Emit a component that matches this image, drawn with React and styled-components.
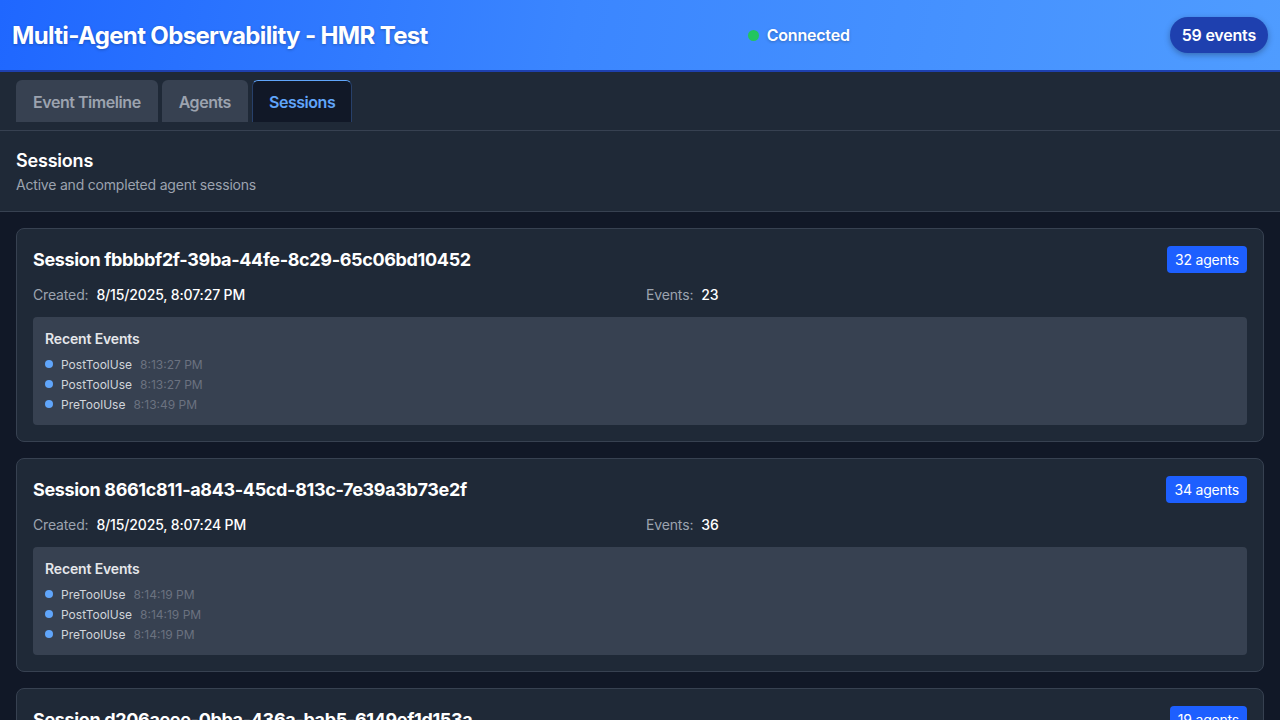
import React from "react";
import styled, { createGlobalStyle } from "styled-components";

const GlobalStyle = createGlobalStyle`
  * { box-sizing: border-box; }
  html, body {
    margin: 0;
    padding: 0;
    background: #111827;
    font-family: Inter, "Noto Sans", "Liberation Sans", sans-serif;
    -webkit-font-smoothing: antialiased;
  }
`;

const sessions = [
  {
    id: "fbbbbf2f-39ba-44fe-8c29-65c06bd10452",
    agents: 32,
    created: "8/15/2025, 8:07:27 PM",
    events: 23,
    recent: [
      { type: "PostToolUse", time: "8:13:27 PM" },
      { type: "PostToolUse", time: "8:13:27 PM" },
      { type: "PreToolUse", time: "8:13:49 PM" },
    ],
  },
  {
    id: "8661c811-a843-45cd-813c-7e39a3b73e2f",
    agents: 34,
    created: "8/15/2025, 8:07:24 PM",
    events: 36,
    recent: [
      { type: "PreToolUse", time: "8:14:19 PM" },
      { type: "PostToolUse", time: "8:14:19 PM" },
      { type: "PreToolUse", time: "8:14:19 PM" },
    ],
  },
  {
    id: "d206aeee-0bba-436a-bab5-6149ef1d153a",
    agents: 19,
    created: "8/15/2025, 8:07:20 PM",
    events: 18,
    recent: [
      { type: "PreToolUse", time: "8:14:02 PM" },
      { type: "PostToolUse", time: "8:14:02 PM" },
      { type: "PreToolUse", time: "8:14:05 PM" },
    ],
  },
];

const App = () => {
  const [tab, setTab] = React.useState("sessions");

  return (
    <>
      <GlobalStyle />
      <Page>
        <Header>
          <Title>Multi-Agent Observability - HMR Test</Title>
          <Status>
            <Dot />
            Connected
          </Status>
          <EventPill>59 events</EventPill>
        </Header>

        <TabBar>
          <Tab active={tab === "timeline"} onClick={() => setTab("timeline")}>
            Event Timeline
          </Tab>
          <Tab active={tab === "agents"} onClick={() => setTab("agents")}>
            Agents
          </Tab>
          <Tab active={tab === "sessions"} onClick={() => setTab("sessions")}>
            Sessions
          </Tab>
        </TabBar>

        <SectionHead>
          <SectionTitle>Sessions</SectionTitle>
          <SectionSub>Active and completed agent sessions</SectionSub>
        </SectionHead>

        <List>
          {sessions.map((s) => (
            <Card key={s.id}>
              <CardTop>
                <CardTitle>Session {s.id}</CardTitle>
                <AgentBadge>{s.agents} agents</AgentBadge>
              </CardTop>
              <Meta>
                <MetaItem>
                  <MetaLabel>Created:</MetaLabel>
                  <MetaValue>{s.created}</MetaValue>
                </MetaItem>
                <MetaItem>
                  <MetaLabel>Events:</MetaLabel>
                  <MetaValue>{s.events}</MetaValue>
                </MetaItem>
              </Meta>
              <Recent>
                <RecentTitle>Recent Events</RecentTitle>
                {s.recent.map((e, i) => (
                  <RecentRow key={i}>
                    <BlueDot />
                    <EventName>{e.type}</EventName>
                    <EventTime>{e.time}</EventTime>
                  </RecentRow>
                ))}
              </Recent>
            </Card>
          ))}
        </List>
      </Page>
    </>
  );
};

const Page = styled.div`
  height: 720px;
  overflow: hidden;
  background: #111827;
`;

const Header = styled.header`
  display: flex;
  align-items: center;
  justify-content: space-between;
  height: 72px;
  padding: 0 12px;
  background: linear-gradient(100deg, #1f67ff 0%, #3b86ff 45%, #4f9cff 100%);
  border-bottom: 2px solid #1e40af;
`;

const Title = styled.h1`
  margin: 0;
  color: #ffffff;
  font-size: 24px;
  font-weight: 700;
  letter-spacing: -0.65px;
  text-shadow: 0 1px 3px rgba(0, 0, 0, 0.25);
`;

const Status = styled.div`
  display: flex;
  align-items: center;
  gap: 8px;
  color: #ffffff;
  font-size: 16px;
  font-weight: 600;
  letter-spacing: -0.2px;
  text-shadow: 0 1px 3px rgba(0, 0, 0, 0.25);
`;

const Dot = styled.span`
  width: 11px;
  height: 11px;
  border-radius: 50%;
  background: #22c55e;
`;

const EventPill = styled.div`
  height: 36px;
  padding: 0 12px;
  display: flex;
  align-items: center;
  border-radius: 999px;
  background: #1e40af;
  color: #ffffff;
  font-size: 16px;
  font-weight: 600;
  letter-spacing: -0.2px;
  box-shadow: 0 2px 6px rgba(0, 0, 0, 0.3);
`;

const TabBar = styled.nav`
  display: flex;
  gap: 4px;
  padding: 8px 16px 8px;
  background: #1f2937;
  border-bottom: 1px solid #374151;
`;

const Tab = styled.button`
  height: 42px;
  padding: 0 16px;
  border: none;
  border-top: 1px solid ${(p) => (p.active ? "#60a5fa" : "transparent")};
  border-left: 1px solid ${(p) => (p.active ? "#27406a" : "transparent")};
  border-right: 1px solid ${(p) => (p.active ? "#27406a" : "transparent")};
  border-radius: 6px 6px 0 0;
  background: ${(p) => (p.active ? "#111827" : "#374151")};
  color: ${(p) => (p.active ? "#60a5fa" : "#9ca3af")};
  font-family: inherit;
  font-size: 16px;
  font-weight: 600;
  letter-spacing: -0.45px;
  cursor: pointer;
`;

const SectionHead = styled.div`
  height: 81px;
  padding: 20px 16px 0;
  background: #1f2937;
  border-bottom: 1px solid #374151;
`;

const SectionTitle = styled.h2`
  margin: 0;
  color: #ffffff;
  font-size: 18px;
  font-weight: 600;
  line-height: 20px;
  letter-spacing: -0.2px;
`;

const SectionSub = styled.p`
  margin: 5px 0 0;
  color: #9ca3af;
  font-size: 14px;
  line-height: 18px;
  letter-spacing: -0.2px;
`;

const List = styled.div`
  display: flex;
  flex-direction: column;
  gap: 16px;
  padding: 16px;
`;

const Card = styled.div`
  padding: 16px;
  background: #1f2937;
  border: 1px solid #374151;
  border-radius: 8px;
`;

const CardTop = styled.div`
  display: flex;
  align-items: center;
  justify-content: space-between;
  height: 28px;
`;

const CardTitle = styled.h3`
  margin: 0;
  color: #ffffff;
  font-size: 18px;
  font-weight: 700;
  letter-spacing: -0.35px;
`;

const AgentBadge = styled.span`
  height: 27px;
  display: flex;
  align-items: center;
  padding: 0 8px;
  border-radius: 4px;
  background: #1d5fff;
  color: #ffffff;
  font-size: 14px;
  letter-spacing: -0.2px;
`;

const Meta = styled.div`
  display: grid;
  grid-template-columns: 1fr 1fr;
  column-gap: 12px;
  margin-top: 12px;
  height: 20px;
  align-items: center;
`;

const MetaItem = styled.div`
  display: flex;
  gap: 8px;
  font-size: 14px;
  line-height: 18px;
  letter-spacing: -0.15px;
`;

const MetaLabel = styled.span`
  color: #9ca3af;
`;

const MetaValue = styled.span`
  color: #ffffff;
  font-weight: 500;
`;

const Recent = styled.div`
  margin-top: 12px;
  padding: 12px 12px 11px;
  background: #374151;
  border-radius: 4px;
`;

const RecentTitle = styled.h4`
  margin: 0 0 5px;
  color: #e5e7eb;
  font-size: 14px;
  font-weight: 600;
  line-height: 20px;
  letter-spacing: -0.15px;
`;

const RecentRow = styled.div`
  display: flex;
  align-items: center;
  gap: 8px;
  height: 20px;
  font-size: 12px;
`;

const BlueDot = styled.span`
  width: 8px;
  height: 8px;
  border-radius: 50%;
  background: #60a5fa;
`;

const EventName = styled.span`
  color: #d1d5db;
`;

const EventTime = styled.span`
  color: #6b7280;
`;

export default App;
